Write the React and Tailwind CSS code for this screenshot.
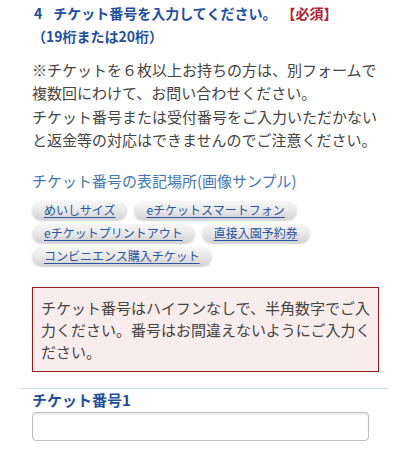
import React from "react";

const font = { fontFamily: '"Noto Sans CJK JP", "Noto Sans", sans-serif' };

function Pill({ children }) {
  return (
    <span className="inline-flex h-[19px] items-center rounded-full bg-gradient-to-b from-[#f7f7f7] via-[#e8e8e8] to-[#d2d2d2] px-[12px] shadow-[0_1px_2px_rgba(0,0,0,0.18)]">
      <a className="text-[12px] leading-none text-[#2c54a3] underline underline-offset-2 decoration-[1px]">
        {children}
      </a>
    </span>
  );
}

export default function App() {
  return (
    <div className="w-[400px] h-[451px] overflow-hidden bg-white" style={font}>
      <div className="ml-[32px] w-[347px] pt-[2px]">
        <h2 className="text-[14px] font-bold leading-[23px] text-[#1f4f9f]">
          <span className="ml-[2px] mr-[11px]">4</span>
          チケット番号を入力してください。
          <span className="ml-[12px] text-[#b1232f]">【必須】</span>
          <br />
          （19桁または20桁）
        </h2>
        <p className="mt-[10px] text-[15px] leading-[23.4px] text-[#444444]">
          ※チケットを６枚以上お持ちの方は、別フォームで複数回にわけて、お問い合わせください。
          <br />
          チケット番号または受付番号をご入力いただかないと返金等の対応はできませんのでご注意ください。
        </p>
        <p className="mt-[17px] text-[15px] leading-[24px] text-[#4576b3]">
          チケット番号の表記場所(画像サンプル)
        </p>
        <div className="mt-[8px] flex w-[300px] flex-wrap gap-x-[7px] gap-y-[4px]">
          <Pill>めいしサイズ</Pill>
          <Pill>eチケットスマートフォン</Pill>
          <Pill>eチケットプリントアウト</Pill>
          <Pill>直接入園予約券</Pill>
          <Pill>コンビニエンス購入チケット</Pill>
        </div>
        <div className="mt-[21px] border border-[#a31a1a] bg-[#f8ecec] pb-[8px] pl-[8px] pr-[6px] pt-[9px] text-[15px] leading-[22px] text-[#444444]">
          チケット番号はハイフンなしで、半角数字でご入力ください。番号はお間違えないようにご入力ください。
        </div>
        <div className="-ml-[11px] mt-[16px] h-px w-[368px] bg-[#c7e2f0]" />
        <div className="text-[15px] font-bold leading-[22px] text-[#1f4f9a]">チケット番号1</div>
        <div className="mt-[1px] h-[29px] w-[337px] rounded-[4px] border border-[#bdbdbd] bg-white shadow-[inset_0_2px_2px_rgba(0,0,0,0.08)]" />
      </div>
    </div>
  );
}
